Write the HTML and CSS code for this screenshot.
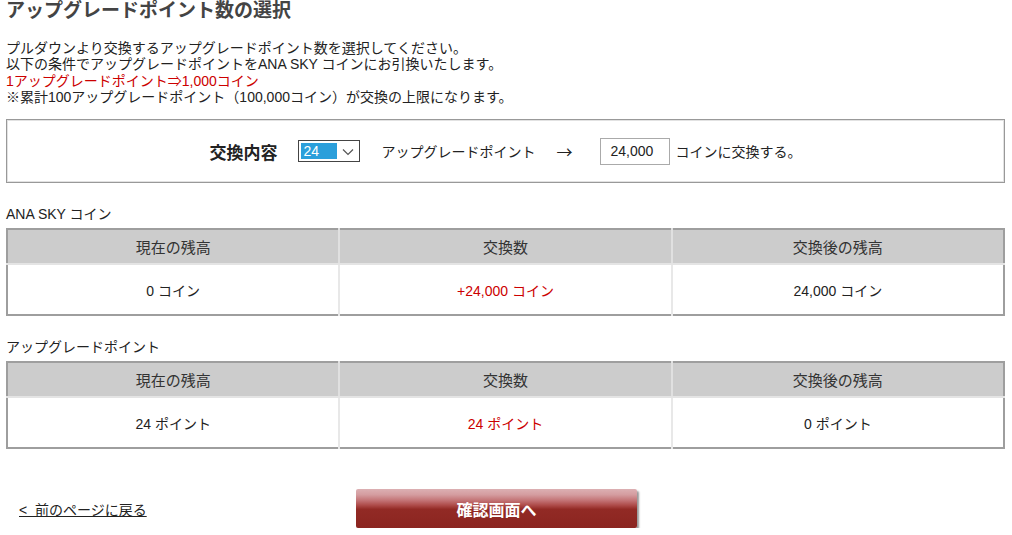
FILE: index.html
```html
<!DOCTYPE html>
<html lang="ja">
<head>
    <meta charset="UTF-8">
    <title>アップグレードポイント数の選択</title>
    <link rel="stylesheet" href="styles.css">
</head>
<body>
    <div class="page">
        <h1 class="page-title">アップグレードポイント数の選択</h1>

        <p class="intro">
            プルダウンより交換するアップグレードポイント数を選択してください。<br>
            以下の条件でアップグレードポイントをANA SKY コインにお引換いたします。<br>
            <span class="red">1アップグレードポイント<span class="cjk">⇒</span>1,000コイン</span><br>
            ※累計100アップグレードポイント（100,000コイン）が交換の上限になります。
        </p>

        <!-- Exchange form -->
        <div class="exchange-box">
            <span class="exchange-label">交換内容</span>
            <span class="fake-select">
                <span class="fake-select-value">24</span>
                <span class="fake-select-arrow">
                    <svg width="12" height="8" viewBox="0 0 12 8"><path d="M1 1.5 L6 6.5 L11 1.5" fill="none" stroke="#555" stroke-width="1.2"/></svg>
                </span>
            </span>
            <span class="exchange-text">アップグレードポイント</span>
            <span class="exchange-arrow">→</span>
            <span class="coin-input">24,000</span>
            <span class="exchange-tail">コインに交換する。</span>
        </div>

        <!-- ANA SKY coin -->
        <h2 class="section-label">ANA SKY コイン</h2>
        <table class="balance-table">
            <tr>
                <th>現在の残高</th>
                <th>交換数</th>
                <th>交換後の残高</th>
            </tr>
            <tr>
                <td>0 コイン</td>
                <td class="red">+24,000 コイン</td>
                <td>24,000 コイン</td>
            </tr>
        </table>

        <!-- Upgrade points -->
        <h2 class="section-label">アップグレードポイント</h2>
        <table class="balance-table">
            <tr>
                <th>現在の残高</th>
                <th>交換数</th>
                <th>交換後の残高</th>
            </tr>
            <tr>
                <td>24 ポイント</td>
                <td class="red">24 ポイント</td>
                <td>0 ポイント</td>
            </tr>
        </table>

        <div class="footer-nav">
            <a href="#" class="back-link">&lt;&nbsp; 前のページに戻る</a>
            <button class="confirm-btn">確認画面へ</button>
        </div>
    </div>
</body>
</html>
```

FILE: styles.css
```css
/* General Styles */
body {
    margin: 0;
    padding: 0;
    background: #fff;
    color: #222;
    font-family: "Liberation Sans", "Noto Sans CJK JP", sans-serif;
    font-size: 14px;
}

.page {
    width: 999px;
    padding: 0 0 0 6px;
}

.page-title {
    margin: 0;
    height: 24px;
    line-height: 22px;
    font-size: 19px;
    font-weight: bold;
    color: #444;
}

.intro {
    margin: 16px 0 0;
    line-height: 16px;
    color: #222;
}

.red {
    color: #cc0000;
}

.cjk {
    font-family: "Noto Sans CJK JP", sans-serif;
}

/* Exchange box */
.exchange-box {
    margin-top: 14px;
    height: 62px;
    border: 1px solid #999;
    box-shadow: inset 0 0 0 1px #e2e2e2;
    display: flex;
    align-items: center;
    justify-content: center;
}

.exchange-label {
    font-size: 17px;
    font-weight: bold;
    margin-right: 21px;
}

.fake-select {
    display: flex;
    align-items: center;
    width: 60px;
    height: 20px;
    border: 1px solid #444;
    margin-right: 21px;
}

.fake-select-value {
    width: 34px;
    height: 16px;
    margin-left: 2px;
    background: #2b9fdb;
    color: #fff;
    line-height: 16px;
    padding-left: 2px;
}

.fake-select-arrow {
    flex: 1;
    display: flex;
    justify-content: center;
    padding-top: 1px;
}

.exchange-text {
    margin-right: 21px;
}

.exchange-arrow {
    font-family: "Noto Sans CJK JP", sans-serif;
    font-size: 16px;
    margin-right: 27px;
}

.coin-input {
    width: 58px;
    height: 25px;
    line-height: 25px;
    border: 1px solid #aaa;
    padding-left: 10px;
    margin-right: 6px;
}

/* Tables */
.section-label {
    margin: 0;
    height: 45px;
    line-height: 18px;
    padding-top: 22px;
    box-sizing: border-box;
    font-size: 14px;
    font-weight: normal;
    color: #222;
}

.balance-table {
    width: 999px;
    border-collapse: collapse;
    table-layout: fixed;
    border: 2px solid #9e9e9e;
}

.balance-table th {
    height: 33px;
    padding: 0;
    background: #cccccc;
    font-size: 15px;
    font-weight: normal;
    color: #333;
    border-left: 2px solid #e0e0e0;
    border-bottom: 2px solid #e4e4e4;
}

.balance-table td {
    height: 49px;
    padding: 0;
    text-align: center;
    font-size: 14px;
    border-left: 2px solid #e8e8e8;
}

.balance-table th:first-child,
.balance-table td:first-child {
    border-left: none;
}

/* Footer */
.footer-nav {
    display: flex;
    align-items: center;
    margin-top: 40px;
    padding-left: 13px;
}

.back-link {
    color: #222;
    font-size: 14px;
    text-decoration: underline;
    width: 337px;
}

.confirm-btn {
    width: 281px;
    height: 39px;
    border: none;
    border-radius: 2px;
    background: linear-gradient(to bottom, #dcb0b3 0%, #d49c9f 15%, #c27173 30%, #ad4a48 42%, #922a25 52%, #8b2520 100%);
    box-shadow: 2px 2px 2px #999;
    color: #fff;
    font-family: "Liberation Sans", "Noto Sans CJK JP", sans-serif;
    font-size: 16px;
    font-weight: bold;
    cursor: pointer;
}
```
